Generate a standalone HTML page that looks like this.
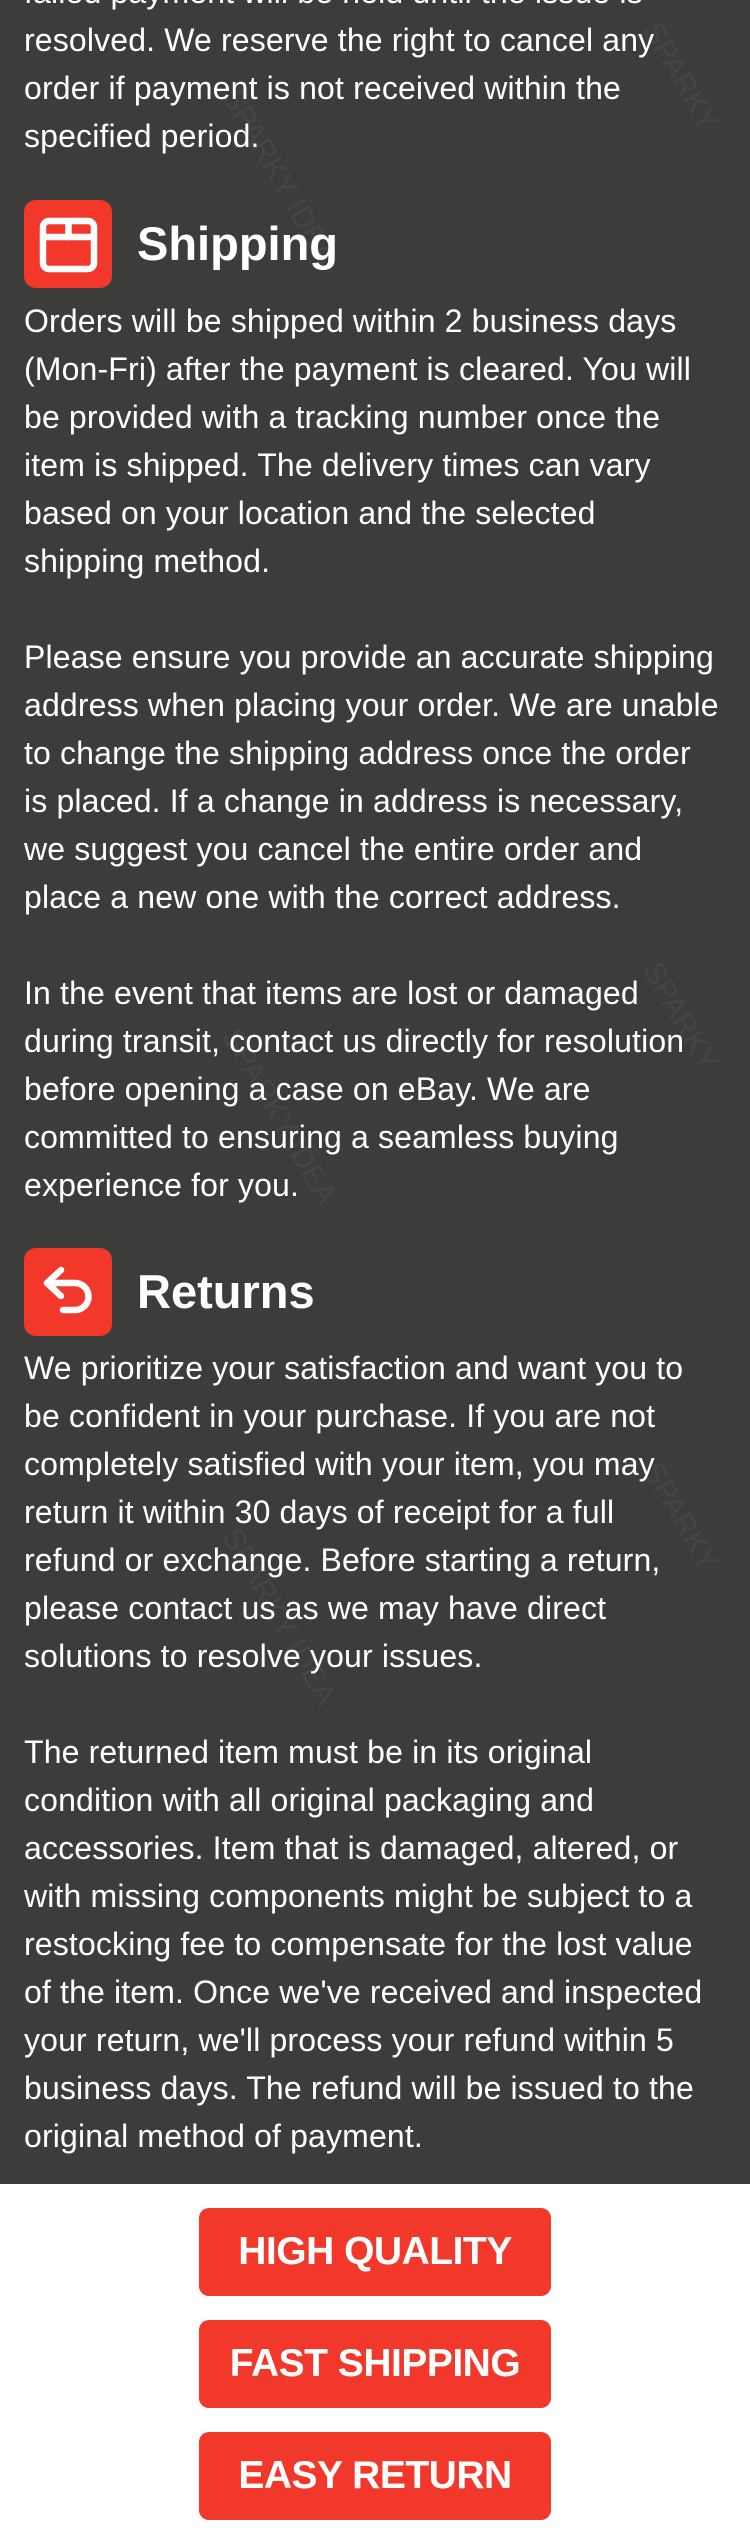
<!DOCTYPE html>
<html><head><meta charset="utf-8"><style>
html,body{margin:0;padding:0;width:750px;height:2544px;overflow:hidden;background:#fff}
body{font-family:"Liberation Sans",Arial,sans-serif}
.dark{position:absolute;left:0;top:0;width:750px;height:2184px;background:#3c3c3b;overflow:hidden}
.p{position:absolute;left:24px;color:#fff;font-size:32px;line-height:48px;white-space:nowrap;letter-spacing:0.15px}
.icon{position:absolute;left:24px;width:88px;height:88px;background:#f2382a;border-radius:12px}
.h{position:absolute;left:137px;color:#fff;font-weight:bold;font-size:47px;line-height:88px}
.btn{position:absolute;left:199px;width:352px;height:88px;background:#f2382a;border-radius:10px;color:#fff;font-weight:bold;font-size:39px;line-height:88px;text-align:center;letter-spacing:-0.5px}
.wm{position:absolute;color:rgba(255,255,255,0.05);font-size:30px;transform:rotate(60deg);white-space:nowrap}
</style></head><body>
<div class="dark">
<div class="wm" style="left:180px;top:160px">SPARKY IDEA</div>
<div class="wm" style="left:620px;top:60px">SPARKY</div>
<div class="wm" style="left:180px;top:1100px">SPARKY IDEA</div>
<div class="wm" style="left:620px;top:1000px">SPARKY</div>
<div class="wm" style="left:620px;top:1500px">SPARKY</div>
<div class="wm" style="left:180px;top:1600px">SPARKY IDEA</div>
<div class="p" style="top:-32px">failed payment will be held until the issue is<br>resolved. We reserve the right to cancel any<br>order if payment is not received within the<br>specified period.</div>
<div class="icon" style="top:200px"><svg width="88" height="88" viewBox="0 0 88 88" fill="none" stroke="#fff" stroke-width="6.5" stroke-linejoin="round" stroke-linecap="round"><rect x="19" y="21" width="51" height="48" rx="6"/><line x1="19" y1="37" x2="70" y2="37"/><line x1="44.5" y1="21" x2="44.5" y2="37"/></svg></div>
<div class="h" style="top:200px">Shipping</div>
<div class="p" style="top:297px">Orders will be shipped within 2 business days<br>(Mon-Fri) after the payment is cleared. You will<br>be provided with a tracking number once the<br>item is shipped. The delivery times can vary<br>based on your location and the selected<br>shipping method.<br><br>Please ensure you provide an accurate shipping<br>address when placing your order. We are unable<br>to change the shipping address once the order<br>is placed. If a change in address is necessary,<br>we suggest you cancel the entire order and<br>place a new one with the correct address.<br><br>In the event that items are lost or damaged<br>during transit, contact us directly for resolution<br>before opening a case on eBay. We are<br>committed to ensuring a seamless buying<br>experience for you.</div>
<div class="icon" style="top:1248px"><svg width="88" height="88" viewBox="0 0 88 88" fill="none" stroke="#fff" stroke-width="6.5" stroke-linejoin="round" stroke-linecap="round"><path d="M37 22 L23 35 L37 48"/><path d="M23 35 H51 A13.5 13.5 0 0 1 51 62 H39"/></svg></div>
<div class="h" style="top:1248px">Returns</div>
<div class="p" style="top:1344px">We prioritize your satisfaction and want you to<br>be confident in your purchase. If you are not<br>completely satisfied with your item, you may<br>return it within 30 days of receipt for a full<br>refund or exchange. Before starting a return,<br>please contact us as we may have direct<br>solutions to resolve your issues.<br><br>The returned item must be in its original<br>condition with all original packaging and<br>accessories. Item that is damaged, altered, or<br>with missing components might be subject to a<br>restocking fee to compensate for the lost value<br>of the item. Once we've received and inspected<br>your return, we'll process your refund within 5<br>business days. The refund will be issued to the<br>original method of payment.</div>
</div>
<div class="btn" style="top:2208px">HIGH QUALITY</div>
<div class="btn" style="top:2320px">FAST SHIPPING</div>
<div class="btn" style="top:2432px">EASY RETURN</div>
</body></html>
